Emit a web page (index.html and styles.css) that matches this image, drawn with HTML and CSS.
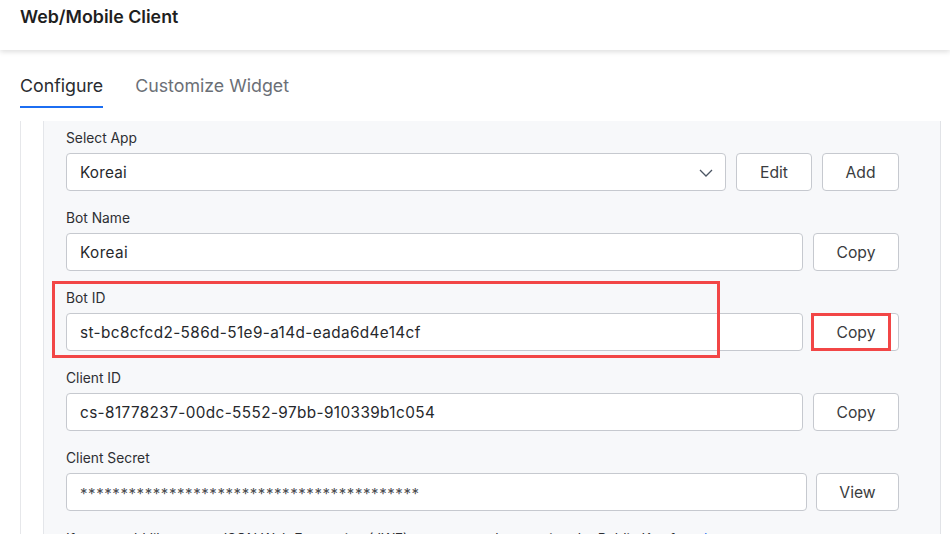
FILE: index.html
```html
<!DOCTYPE html>
<html>
<head>
<meta charset="utf-8">
<link rel="stylesheet" href="styles.css">
</head>
<body>
<header class="topbar">
  <h1 class="title">Web/Mobile Client</h1>
</header>
<nav class="tabs">
  <div class="tab active">Configure</div>
  <div class="tab">Customize Widget</div>
</nav>
<main class="outer">
  <section class="panel">
    <div class="row">
      <label class="label">Select App</label>
      <div class="line">
        <div class="field select">
          <span>Koreai</span>
          <svg class="chev" width="14" height="8" viewBox="0 0 14 8"><path d="M1 1l6 6 6-6" fill="none" stroke="#4b5563" stroke-width="1.3"/></svg>
        </div>
        <button class="btn w-edit">Edit</button>
        <button class="btn w-add">Add</button>
      </div>
    </div>
    <div class="row">
      <label class="label">Bot Name</label>
      <div class="line">
        <div class="field">Koreai</div>
        <button class="btn w-copy">Copy</button>
      </div>
    </div>
    <div class="row marked">
      <label class="label">Bot ID</label>
      <div class="line">
        <div class="field">st-bc8cfcd2-586d-51e9-a14d-eada6d4e14cf</div>
        <button class="btn w-copy">Copy</button>
      </div>
      <div class="mark mark-field"></div>
      <div class="mark mark-btn"></div>
    </div>
    <div class="row">
      <label class="label">Client ID</label>
      <div class="line">
        <div class="field">cs-81778237-00dc-5552-97bb-910339b1c054</div>
        <button class="btn w-copy">Copy</button>
      </div>
    </div>
    <div class="row">
      <label class="label">Client Secret</label>
      <div class="line gap9">
        <div class="field secret">******************************************</div>
        <button class="btn w-view">View</button>
      </div>
    </div>
    <p class="note">If you would like to use JSON Web Encryption (JWE) to encrypt tokens, using the Public Key from <a href="#">here</a>.</p>
  </section>
</main>
</body>
</html>
```
FILE: styles.css
```css
* { box-sizing: border-box; }
html, body { margin: 0; padding: 0; }
body {
  font-family: Inter, "Noto Sans", sans-serif;
  color: #202124;
  background: #fff;
  width: 950px;
  height: 534px;
  overflow: hidden;
}
.topbar {
  height: 50px;
  padding: 0 20px;
  background: #fff;
  box-shadow: 0 2px 5px rgba(0,0,0,0.13);
  position: relative;
  z-index: 1;
}
.title {
  margin: 0;
  padding-top: 6px;
  font-size: 17.8px;
  font-weight: 600;
  line-height: 22px;
  color: #1f1f1f;
}
.tabs {
  display: flex;
  gap: 32px;
  padding: 23px 20px 0;
  height: 71px;
}
.tab {
  font-size: 17.8px;
  line-height: 25px;
  color: #6b6f76;
  height: 35px;
}
.tab.active {
  color: #2a2c30;
  border-bottom: 2px solid #1c6ef2;
}
.outer {
  margin-left: 20px;
  border-left: 1px solid #e6e7ea;
  padding-left: 22px;
  width: 921px;
}
.panel {
  background: #f7f8fa;
  border-left: 1px solid #e4e6ea;
  border-right: 1px solid #e1e3e7;
  padding: 9px 41px 0 22px;
  height: 420px;
}
.row {
  position: relative;
  height: 80px;
}
.label {
  display: block;
  font-size: 13.8px;
  line-height: 16px;
  color: #2d2f33;
  margin-bottom: 7px;
}
.line {
  display: flex;
  gap: 10px;
  height: 38px;
}
.line.gap9 { gap: 9px; }
.field {
  flex: 1;
  display: flex;
  align-items: center;
  background: #fff;
  border: 1px solid #c6c9cf;
  border-radius: 4px;
  padding: 0 13px;
  font-size: 15.3px;
  letter-spacing: 0.4px;
  color: #26282c;
}
.select { justify-content: space-between; padding-right: 12px; letter-spacing: 0.2px; }
.chev { margin-top: 1px; }
.secret { font-size: 15px; letter-spacing: 0.57px; padding-top: 2px; color: #4a4c50; }
.btn {
  height: 38px;
  background: #fff;
  border: 1px solid #c6c9cf;
  border-radius: 4px;
  font-family: inherit;
  font-size: 15.7px;
  color: #3a3c40;
  padding: 0;
}
.w-edit { width: 76px; }
.w-add { width: 77px; }
.w-copy { width: 86px; }
.w-view { width: 83px; }
.mark {
  position: absolute;
  border: 3px solid #f24646;
}
.mark-field { left: -14px; top: -9px; width: 668px; height: 77px; }
.mark-btn { left: 745px; top: 23px; width: 80px; height: 38px; }
.note {
  margin: 0;
  padding-top: 1px;
  font-size: 13.8px;
  line-height: 16px;
  color: #2d2f33;
}
.note a { color: #1c6ef2; text-decoration: none; }
```
